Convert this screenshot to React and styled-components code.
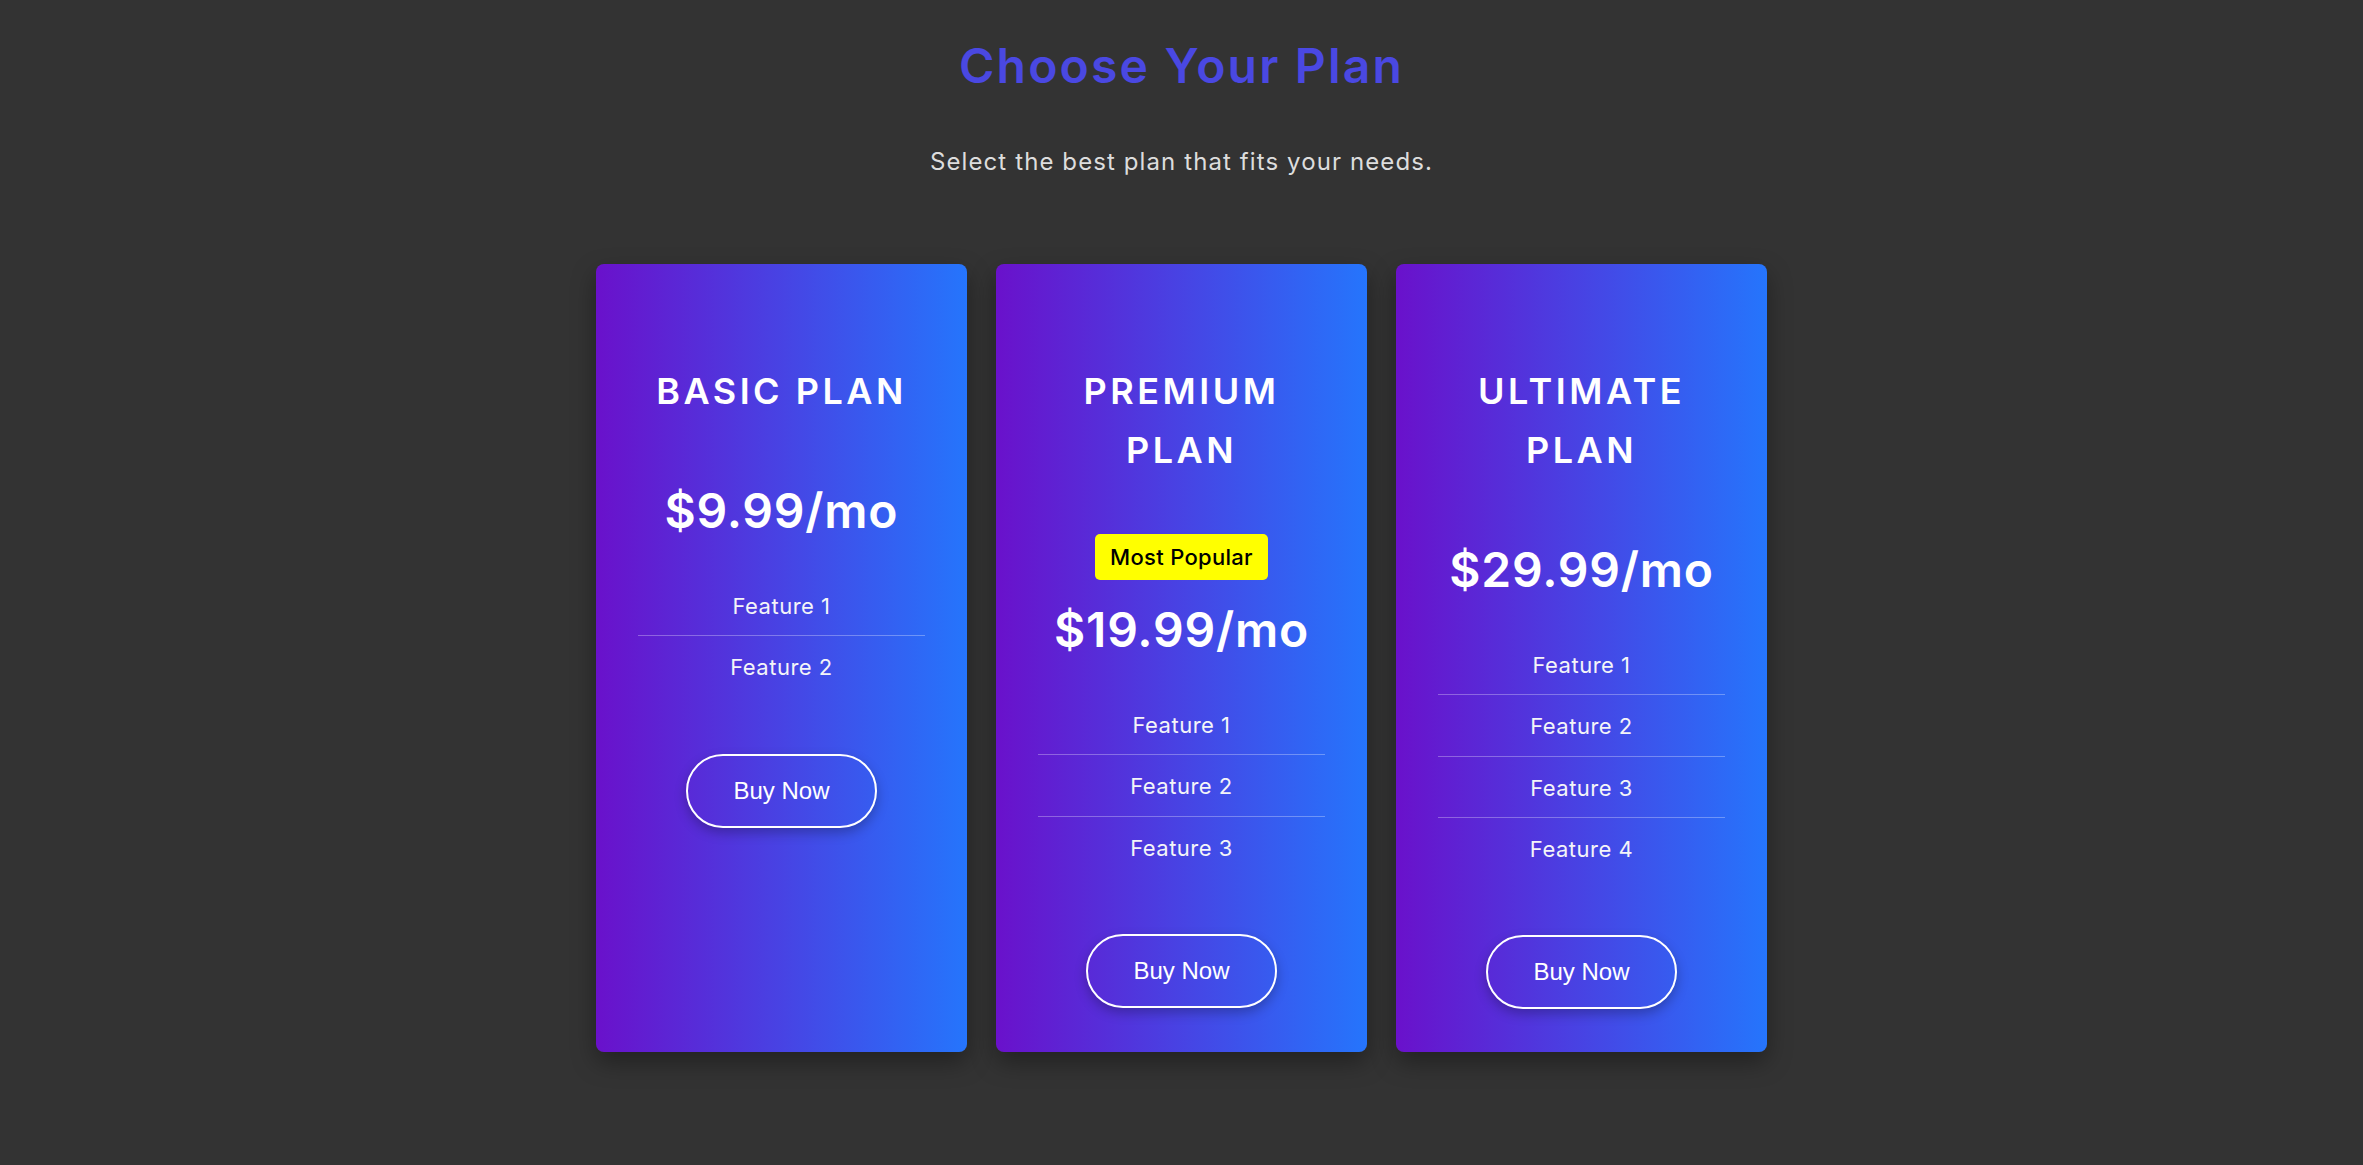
import React from "react";
import styled, { createGlobalStyle } from "styled-components";

const GlobalStyle = createGlobalStyle`
  html, body {
    margin: 0;
    padding: 0;
    background: #333333;
  }
  body {
    font-family: "Inter", "Noto Sans", sans-serif;
    min-height: 1165px;
  }
`;

const plans = [
  { name: "Basic Plan", price: "$9.99/mo", features: ["Feature 1", "Feature 2"] },
  {
    name: "Premium Plan",
    price: "$19.99/mo",
    popular: true,
    features: ["Feature 1", "Feature 2", "Feature 3"],
  },
  {
    name: "Ultimate Plan",
    price: "$29.99/mo",
    features: ["Feature 1", "Feature 2", "Feature 3", "Feature 4"],
  },
];

function App() {
  return (
    <Page>
      <GlobalStyle />
      <Heading>Choose Your Plan</Heading>
      <Subtitle>Select the best plan that fits your needs.</Subtitle>
      <CardRow>
        {plans.map((plan) => (
          <Card key={plan.name}>
            <PlanName>{plan.name}</PlanName>
            {plan.popular && <Badge>Most Popular</Badge>}
            <Price $afterBadge={plan.popular}>{plan.price}</Price>
            <FeatureList>
              {plan.features.map((f) => (
                <FeatureItem key={f}>{f}</FeatureItem>
              ))}
            </FeatureList>
            <BuyButton>Buy Now</BuyButton>
          </Card>
        ))}
      </CardRow>
    </Page>
  );
}

export default App;

const Page = styled.div`
  display: flex;
  flex-direction: column;
  align-items: center;
  padding-bottom: 60px;
`;

const Heading = styled.h1`
  margin: 37px 0 0;
  font-size: 48px;
  line-height: 1.2;
  font-weight: 600;
  color: #4a48e2;
  letter-spacing: 2.2px;
`;

const Subtitle = styled.p`
  margin: 53px 0 0;
  font-size: 24px;
  line-height: 1.15;
  color: #dddddd;
  letter-spacing: 1.1px;
`;

const CardRow = styled.div`
  display: flex;
  justify-content: center;
  align-items: stretch;
  gap: 29px;
  margin-top: 89px;
`;

const Card = styled.div`
  width: 371px;
  box-sizing: border-box;
  padding: 40px 42px 43px;
  display: flex;
  flex-direction: column;
  align-items: center;
  background: linear-gradient(to right, #6a11cb, #2575fc);
  border-radius: 8px;
  box-shadow: 0 10px 25px rgba(0, 0, 0, 0.35);
  color: #ffffff;
  text-align: center;
`;

const PlanName = styled.h2`
  margin: 58px 0 0;
  font-size: 36px;
  line-height: 59px;
  font-weight: 600;
  letter-spacing: 3.5px;
  text-transform: uppercase;
`;

const Badge = styled.span`
  margin: 54px 0 21px;
  height: 46px;
  box-sizing: border-box;
  padding: 0 15px;
  display: inline-flex;
  align-items: center;
  background: #ffff00;
  color: #000000;
  border-radius: 5px;
  font-size: 22px;
  font-weight: 500;
  letter-spacing: 0.3px;
`;

const Price = styled.div`
  margin: ${(p) => (p.$afterBadge ? "0" : "61px")} 0 35px;
  font-size: 48px;
  line-height: 1.2;
  font-weight: 600;
  letter-spacing: 0.8px;
`;

const FeatureList = styled.ul`
  list-style: none;
  margin: 0;
  padding: 0;
  align-self: stretch;
`;

const FeatureItem = styled.li`
  padding: 18px 0 16px;
  font-size: 22px;
  line-height: 1.2;
  color: #f4f4f8;
  letter-spacing: 0.5px;
  border-bottom: 1px solid rgba(255, 255, 255, 0.3);

  &:last-child {
    border-bottom: none;
  }
`;

const BuyButton = styled.button`
  margin-top: 57px;
  padding: 21px 45px;
  background: transparent;
  border: 2px solid #ffffff;
  border-radius: 40px;
  color: #ffffff;
  font-family: "Liberation Sans", Arial, sans-serif;
  font-size: 24px;
  cursor: pointer;
  box-shadow: 0 5px 12px rgba(0, 0, 0, 0.25);
`;
